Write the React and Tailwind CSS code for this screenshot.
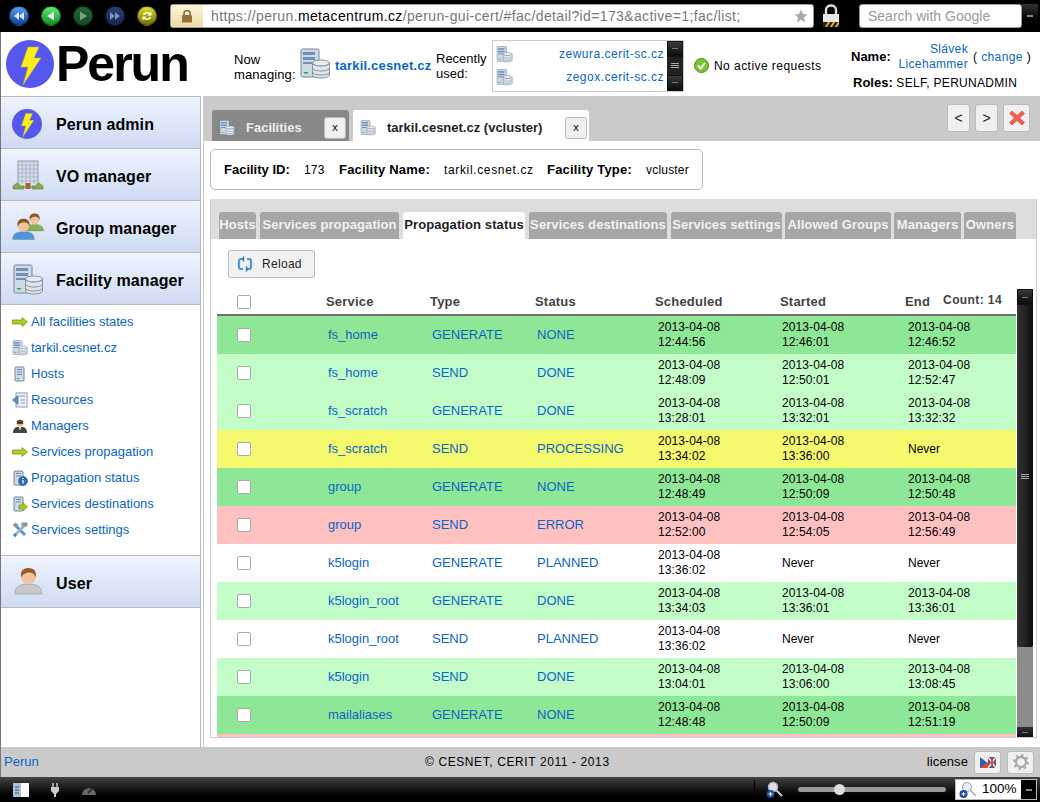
import React from "react";

const rows = [
  ["fs_home", "GENERATE", "NONE", "12:44:56", "12:46:01", "12:46:52", "bg-[#8ee796]"],
  ["fs_home", "SEND", "DONE", "12:48:09", "12:50:01", "12:52:47", "bg-[#c3fec8]"],
  ["fs_scratch", "GENERATE", "DONE", "13:28:01", "13:32:01", "13:32:32", "bg-[#c3fec8]"],
  ["fs_scratch", "SEND", "PROCESSING", "13:34:02", "13:36:00", null, "bg-[#f4f96d]"],
  ["group", "GENERATE", "NONE", "12:48:49", "12:50:09", "12:50:48", "bg-[#8ee796]"],
  ["group", "SEND", "ERROR", "12:52:00", "12:54:05", "12:56:49", "bg-[#ffc0c0]"],
  ["k5login", "GENERATE", "PLANNED", "13:36:02", null, null, "bg-white"],
  ["k5login_root", "GENERATE", "DONE", "13:34:03", "13:36:01", "13:36:01", "bg-[#c3fec8]"],
  ["k5login_root", "SEND", "PLANNED", "13:36:02", null, null, "bg-white"],
  ["k5login", "SEND", "DONE", "13:04:01", "13:06:00", "13:08:45", "bg-[#c3fec8]"],
  ["mailaliases", "GENERATE", "NONE", "12:48:48", "12:50:09", "12:51:19", "bg-[#8ee796]"],
];

const tabs = [
  ["Hosts", "w-[37px]"],
  ["Services propagation", "ml-px w-[139px]"],
  ["Propagation status", "ml-px w-[122px]"],
  ["Services destinations", "ml-px w-[138px]"],
  ["Services settings", "ml-px w-[111px]"],
  ["Allowed Groups", "w-[106px]"],
  ["Managers", "w-[67px]"],
  ["Owners", "w-[52px]"],
];

const Bolt = ({ size }) => (
  <svg width={size} height={size} viewBox="0 0 48 48">
    <circle cx="24" cy="24" r="24" fill="#5656f0" />
    <path d="M22 7 H33 L28 18 H35 L17 45 L22 27 H15 Z" fill="#f8ee1c" stroke="#c8b810" strokeWidth="0.5" />
  </svg>
);

const Server = ({ size = 16 }) => (
  <svg width={size} height={size} viewBox="0 0 32 32">
    <rect x="2" y="1" width="18" height="28" rx="1.5" fill="#cfd9e6" stroke="#74869b" />
    <rect x="4" y="4" width="12" height="3" fill="#6f93b8" />
    <rect x="4" y="9" width="12" height="3" fill="#6f93b8" />
    <rect x="4" y="14" width="12" height="2" fill="#6f93b8" />
    <rect x="5" y="24" width="4" height="1.5" fill="#3a3" />
    <ellipse cx="22" cy="15" rx="8.5" ry="3" fill="#e8edf2" stroke="#8795a3" />
    <path d="M13.5 15 V27 C13.5 31 30.5 31 30.5 27 V15 C30.5 19 13.5 19 13.5 15 Z" fill="#dfe5ea" stroke="#8795a3" />
    <path d="M13.5 20 C13.5 24 30.5 24 30.5 20 M13.5 24 C13.5 28 30.5 28 30.5 24" fill="none" stroke="#8795a3" />
  </svg>
);

const Building = () => (
  <svg width="32" height="32" viewBox="0 0 32 32">
    <rect x="6" y="1" width="20" height="26" fill="#d4dde8" stroke="#8d9aa8" />
    <path d="M10 1 V24 M14 1 V24 M18 1 V24 M22 1 V24 M6 5 H26 M6 9 H26 M6 13 H26 M6 17 H26 M6 21 H26" stroke="#9fb0c2" strokeWidth="0.8" />
    <rect x="13.5" y="23" width="5" height="6" fill="#a9662c" />
    <path d="M1 29 L1 26 L5 23 L9 26 L12 26 L12 29 Z M20 29 L20 26 L23 26 L27 23 L31 26 L31 29 Z" fill="#84ad4f" stroke="#5c7f33" strokeWidth="0.6" />
  </svg>
);

const Person = ({ x, y, s, shirt, hair }) => (
  <g transform={`translate(${x} ${y}) scale(${s})`}>
    <path d="M1 30 C1 21 7 20 12 19 L20 19 C25 20 31 21 31 30 Z" fill={shirt} stroke="#0003" />
    <circle cx="16" cy="11" r="8" fill="#eec39c" />
    <path d="M8 12 C6 3 12 1 16 1 C21 1 26 4 24 12 C23 7 20 6 16 6 C12 7 9 8 8 12 Z" fill={hair} />
  </g>
);

const Group = () => (
  <svg width="32" height="32" viewBox="0 0 32 32">
    <Person x={13} y={1} s={0.6} shirt="#8ab04f" hair="#8b5424" />
    <Person x={0} y={6} s={0.72} shirt="#4d97d8" hair="#8b5424" />
  </svg>
);

const User = () => (
  <svg width="32" height="32" viewBox="0 0 32 32">
    <Person x={2} y={0} s={0.9} shirt="#c8c8c8" hair="#9a5a26" />
  </svg>
);

const Arrow = () => (
  <svg width="16" height="16" viewBox="0 0 16 16">
    <path d="M0 6 H10 V3.5 L15.5 8 L10 12.5 V10 H0 Z" fill="#a8d028" stroke="#6c8a10" strokeWidth="0.7" />
  </svg>
);

const Hosts = () => (
  <svg width="16" height="16" viewBox="0 0 16 16">
    <rect x="3" y="1" width="9" height="14" rx="1" fill="#cfd9e6" stroke="#74869b" />
    <path d="M5 3.5 H10 M5 6 H10 M5 8.5 H10" stroke="#6f8fb0" />
    <rect x="5" y="12" width="2" height="1" fill="#3a3" />
  </svg>
);

const Resources = () => (
  <svg width="16" height="16" viewBox="0 0 16 16">
    <rect x="4" y="1" width="11" height="14" fill="#f2f5f9" stroke="#8c9aaa" />
    <path d="M7 4 H13 M9 8 H13 M9 11 H13" stroke="#7d94ad" />
    <path d="M0.5 8 L6 3.5 V12.5 Z" fill="#4d97d8" stroke="#2a6da8" strokeWidth="0.6" />
  </svg>
);

const Manager = () => (
  <svg width="16" height="16" viewBox="0 0 16 16">
    <path d="M1 15 C1 10 4 9 6 9 H10 C12 9 15 10 15 15 Z" fill="#444" />
    <path d="M7 9 H9 L8 13 Z" fill="#fff" />
    <circle cx="8" cy="5" r="3.5" fill="#e6b98e" />
    <path d="M4.5 4 C5 1 11 1 11.5 4 Z" fill="#7a4a1e" />
    <rect x="5" y="4.2" width="6" height="1.5" fill="#111" />
  </svg>
);

const PropStatus = () => (
  <svg width="16" height="16" viewBox="0 0 16 16">
    <rect x="2" y="1" width="9" height="14" rx="1" fill="#cfd9e6" stroke="#74869b" />
    <path d="M4 3.5 H9 M4 6 H9" stroke="#6f8fb0" />
    <circle cx="11" cy="11" r="4.5" fill="#2d6fb8" stroke="#1d4f8a" strokeWidth="0.6" />
    <path d="M11 10 V13.5 M11 8 V9" stroke="#fff" strokeWidth="1.3" />
  </svg>
);

const Destinations = () => (
  <svg width="16" height="16" viewBox="0 0 16 16">
    <rect x="2" y="1" width="9" height="14" rx="1" fill="#cfd9e6" stroke="#74869b" />
    <path d="M4 3.5 H9 M4 6 H9" stroke="#6f8fb0" />
    <path d="M7 9 H11 V6.5 L15.5 11 L11 15 V13 H7 Z" fill="#9ccc28" stroke="#6c8a10" strokeWidth="0.6" />
  </svg>
);

const Tools = () => (
  <svg width="16" height="16" viewBox="0 0 16 16">
    <path d="M3 3 L13 13" stroke="#4d97d8" strokeWidth="2.8" />
    <path d="M13 3 L3 13" stroke="#a6aeb6" strokeWidth="2.6" />
    <path d="M0.5 3 L3.5 0.5 L6.5 3 L3.5 5.5 Z M9.5 0.5 H15.5 V4.5 H9.5 Z" fill="#8d959d" />
    <path d="M1 13 L3 11 L5 13 L3 15.5 Z" fill="#3c82c4" />
  </svg>
);

const NavButton = ({ from, to, children }) => (
  <div className={`w-5 h-5 rounded-full bg-gradient-to-b ${from} ${to} border border-black/40 flex items-center justify-center`}>
    <svg width="14" height="14" viewBox="0 0 14 14" fill="#dfe8f0">
      {children}
    </svg>
  </div>
);

const ThumbButton = ({ children }) => (
  <div className="h-[16px] w-[16px] shrink-0 bg-gradient-to-b from-[#3a3a3a] to-[#0c0c0c] border border-[#111] flex items-center justify-center">
    {children}
  </div>
);

const SmallBtn = ({ className, children }) => (
  <div className={`bg-[#f0f0f0] border border-[#bbb] rounded-[3px] flex items-center justify-center shrink-0 ${className}`}>
    {children}
  </div>
);

const MenuItem = ({ icon, label }) => (
  <div className="h-[52px] pt-[3px] flex items-center bg-gradient-to-b from-[#eff3fd] to-[#cfdbf4] border-b border-[#bbb]">
    <div className="w-[55px] pl-[11px] flex items-center">{icon}</div>
    <span className="mt-[2px] text-[16px] font-bold text-black tracking-[0.1px]">{label}</span>
  </div>
);

const SubItem = ({ icon, label }) => (
  <div className="h-[26px] flex items-center gap-[3px] pl-[10px]">
    <span className="w-[17px] flex justify-center">{icon}</span>
    <span className="text-[13px] text-[#0a65c8]">{label}</span>
  </div>
);

const TwoLines = ({ time, never }) =>
  time ? (
    <div className="text-[12px] leading-[15px] text-black tracking-[0.1px]">
      2013-04-08
      <br />
      {time}
    </div>
  ) : (
    <div className="text-[12px] text-black">{never}</div>
  );

const Checkbox = () => (
  <div className="pl-[20px]">
    <div className="w-[14px] h-[14px] bg-white border border-[#aaa] rounded-[2px]" />
  </div>
);

const App = () => {
  return (
    <div className="w-[1040px] h-[802px] flex flex-col overflow-hidden bg-white font-['Liberation_Sans',sans-serif]">
      {/* browser toolbar */}
      <div className="h-[32px] shrink-0 bg-black flex items-center pl-[9px]">
        <div className="flex gap-[12px]">
          <NavButton from="from-[#5c9cf0]" to="to-[#0c3f9a]"><path d="M7 3 L2 7 L7 11 Z M12 3 L7 7 L12 11 Z" /></NavButton>
          <NavButton from="from-[#5cf06c]" to="to-[#0c8a24]"><path d="M10 2.5 L3 7 L10 11.5 Z" /></NavButton>
          <NavButton from="from-[#1e6a34]" to="to-[#144a24]"><path d="M4 2.5 L11 7 L4 11.5 Z" fill="#7f9f88" /></NavButton>
          <NavButton from="from-[#24407a]" to="to-[#152750]"><path d="M2 3 L7 7 L2 11 Z M7 3 L12 7 L7 11 Z" fill="#8090b0" /></NavButton>
          <NavButton from="from-[#e6e020]" to="to-[#6e6a08]"><path d="M3 6 C3 3 8 2 10 4 L11.5 2.5 V6.5 H7.5 L9 5 C7.5 4 5 4.5 4.5 6 Z M11 8 C11 11 6 12 4 10 L2.5 11.5 V7.5 H6.5 L5 9 C6.5 10 9 9.5 9.5 8 Z" fill="#fff" /></NavButton>
        </div>
        <div className="ml-[13px] w-[644px] h-[24px] rounded-[3px] bg-white flex items-center overflow-hidden border border-[#999]">
          <div className="w-[32px] h-full bg-gradient-to-b from-[#fdf5d8] to-[#ecdca6] flex items-center justify-center shrink-0">
            <svg width="12" height="14" viewBox="0 0 12 14">
              <path d="M3 6 V4 C3 1 9 1 9 4 V6" fill="none" stroke="#8a6a30" strokeWidth="1.6" />
              <rect x="1" y="6" width="10" height="7.5" rx="1" fill="#94703a" />
            </svg>
          </div>
          <div className="pl-[8px] flex-1 text-[14px] text-[#777] tracking-[0.37px] whitespace-nowrap">
            https://perun.<span className="text-black">metacentrum.cz</span>/perun-gui-cert/#fac/detail?id=173&active=1;fac/list;
          </div>
          <svg width="14" height="14" viewBox="0 0 14 14" className="mr-[5px]">
            <path d="M7 0.5 L9 5 L13.5 5.4 L10 8.5 L11 13.5 L7 10.8 L3 13.5 L4 8.5 L0.5 5.4 L5 5 Z" fill="#aaa" />
          </svg>
        </div>
        <svg width="20" height="26" viewBox="0 0 20 26" className="ml-[7px]">
          <path d="M5 12 V7 C5 1 15 1 15 7 V12" fill="none" stroke="#ddd" strokeWidth="2.4" />
          <rect x="2" y="11" width="16" height="10" fill="#e8e8e8" />
          <rect x="2" y="19" width="16" height="5" fill="#222" />
          <path d="M4 24 L7 19 H9 L6 24 Z M9 24 L12 19 H14 L11 24 Z M14 24 L17 19 H18 V21 L16 24 Z" fill="#e8c020" />
        </svg>
        <div className="ml-[18px] w-[163px] h-[24px] bg-white rounded-[3px] border border-[#999] flex items-center pl-[8px] text-[14px] text-[#999] whitespace-nowrap">
          Search with Google
        </div>
        <div className="w-[16px] h-[24px] bg-gradient-to-b from-[#333] to-black flex items-center justify-center">
          <div className="w-[6px] h-[2px] bg-[#888]" />
        </div>
      </div>

      <div className="flex-1 flex flex-col border-l border-[#777] min-h-0">
        {/* app header */}
        <div className="h-[64px] shrink-0 flex items-center bg-white">
          <div className="ml-[5px]"><Bolt size={48} /></div>
          <div className="ml-[2px] text-[50px] font-bold leading-none text-black tracking-[-2px] w-[178px]">Perun</div>
          <div className="text-[13px] leading-[15px] text-black mt-[5px] tracking-[0.1px] w-[65px]">
            Now
            <br />
            managing:
          </div>
          <Server size={32} />
          <div className="ml-[4px] mt-[3px] text-[13px] font-bold text-[#0a65c8] tracking-[0.2px] w-[62px] whitespace-nowrap">tarkil.cesnet.cz</div>
          <div className="ml-[39px] mt-[4px] text-[13px] leading-[15px] text-black w-[56px]">
            Recently
            <br />
            used:
          </div>
          <div className="w-[192px] h-[52px] mt-[3px] border border-[#ccc] flex overflow-hidden">
            <div className="flex-1 pl-[3px] pr-[3px] pt-[2px] overflow-hidden">
              {["zewura.cerit-sc.cz", "zegox.cerit-sc.cz", ""].map((name, i) => (
                <div key={i} className="h-[23px] flex items-center justify-between">
                  <Server size={17} />
                  <span className="text-[12px] text-[#0a65c8] tracking-[0.5px]">{name}</span>
                </div>
              ))}
            </div>
            <div className="w-[16px] flex flex-col bg-[#111]">
              <ThumbButton><div className="w-[6px] h-[1px] bg-[#777]" /></ThumbButton>
              <div className="flex-1 flex flex-col items-center justify-center gap-px bg-[#222]">
                <div className="w-[8px] h-px bg-[#aaa]" />
                <div className="w-[8px] h-px bg-[#aaa]" />
                <div className="w-[8px] h-px bg-[#aaa]" />
              </div>
              <ThumbButton><div className="w-[6px] h-[1px] bg-[#777]" /></ThumbButton>
            </div>
          </div>
          <svg width="15" height="15" viewBox="0 0 15 15" className="ml-[10px] mt-[3px]">
            <circle cx="7.5" cy="7.5" r="7" fill="#7cc430" stroke="#4f8a18" />
            <path d="M4 7.5 L6.6 10.5 L11 5" fill="none" stroke="#fff" strokeWidth="2" />
          </svg>
          <div className="ml-[5px] mt-[3px] w-[137px] text-[12px] text-black tracking-[0.45px] whitespace-nowrap">No active requests</div>
          <div className="text-[13px] text-black whitespace-nowrap mt-[6px]">
            <div className="flex items-center">
              <span className="font-bold w-[46px]">Name:</span>
              <span className="w-[71px] text-right leading-[15px] text-[#0a65c8] text-[12px] tracking-[0.35px]">
                Slávek
                <br />
                Licehammer
              </span>
              <span className="ml-[5px] text-[12px] tracking-[0.4px]">( <span className="text-[#0a65c8]">change</span> )</span>
            </div>
            <div className="mt-px pl-[2px] text-[12px] tracking-[0.3px]">
              <span className="font-bold text-[13px] tracking-normal">Roles:</span> SELF, PERUNADMIN
            </div>
          </div>
        </div>

        <div className="flex-1 flex min-h-0">
          {/* left menu */}
          <div className="w-[202px] shrink-0 flex">
            <div className="w-[200px] border-r border-t border-[#bbb]">
              <MenuItem icon={<Bolt size={30} />} label="Perun admin" />
              <MenuItem icon={<Building />} label="VO manager" />
              <MenuItem icon={<Group />} label="Group manager" />
              <MenuItem icon={<Server size={32} />} label="Facility manager" />
              <div className="h-[251px] pt-[4px] border-b border-[#bbb]">
                <SubItem icon={<Arrow />} label="All facilities states" />
                <SubItem icon={<Server size={16} />} label="tarkil.cesnet.cz" />
                <SubItem icon={<Hosts />} label="Hosts" />
                <SubItem icon={<Resources />} label="Resources" />
                <SubItem icon={<Manager />} label="Managers" />
                <SubItem icon={<Arrow />} label="Services propagation" />
                <SubItem icon={<PropStatus />} label="Propagation status" />
                <SubItem icon={<Destinations />} label="Services destinations" />
                <SubItem icon={<Tools />} label="Services settings" />
              </div>
              <MenuItem icon={<User />} label="User" />
            </div>
          </div>

          {/* main panel */}
          <div className="flex-1 min-w-0 border-l border-[#ccc] flex flex-col bg-white">
            <div className="h-[45px] shrink-0 bg-[#cacaca] flex items-end pl-[8px] pr-[10px]">
              <div className="w-[137px] h-[31px] bg-[#888] rounded-t-[3px] flex items-center pl-[7px] pt-[4px]">
                <Server size={16} />
                <span className="ml-[11px] text-[13px] font-bold text-[#eee] w-[62px]">Facilities</span>
                <SmallBtn className="ml-[16px] w-[22px] h-[22px] text-[11px] text-black">x</SmallBtn>
              </div>
              <div className="ml-[4px] w-[236px] h-[31px] bg-white rounded-t-[3px] flex items-center pl-[7px] pt-[4px]">
                <Server size={16} />
                <span className="ml-[11px] text-[13px] font-bold text-[#222] w-[176px] whitespace-nowrap">tarkil.cesnet.cz (vcluster)</span>
                <SmallBtn className="ml-[2px] w-[22px] h-[22px] text-[11px] text-black">x</SmallBtn>
              </div>
              <div className="ml-auto self-start mt-[8px] flex gap-[5px]">
                <SmallBtn className="w-[23px] h-[28px] text-[14px] text-[#222]">&lt;</SmallBtn>
                <SmallBtn className="w-[23px] h-[28px] text-[14px] text-[#222]">&gt;</SmallBtn>
                <SmallBtn className="w-[27px] h-[28px]">
                  <svg width="16" height="16" viewBox="0 0 16 16">
                    <path d="M3 1 L8 5.5 L13 1 L15.5 3.5 L10.5 8 L15.5 12.5 L13 15 L8 10.5 L3 15 L0.5 12.5 L5.5 8 L0.5 3.5 Z" fill="#f0604c" stroke="#c84030" strokeWidth="0.6" />
                  </svg>
                </SmallBtn>
              </div>
            </div>

            <div className="flex-1 min-h-0 pl-[6px] pt-[8px] pr-[3px] flex flex-col">
              {/* facility info */}
              <div className="w-[493px] h-[41px] shrink-0 border border-[#bbb] rounded-[5px] flex items-center text-[12px] text-black">
                <span className="ml-[13px] w-[80px] font-bold text-[13px]">Facility ID:</span>
                <span className="w-[35px] tracking-[0.2px]">173</span>
                <span className="w-[105px] font-bold text-[13px] tracking-[0.2px]">Facility Name:</span>
                <span className="w-[103px] tracking-[0.65px]">tarkil.cesnet.cz</span>
                <span className="w-[99px] font-bold text-[13px] tracking-[0.2px]">Facility Type:</span>
                <span className="tracking-[0.2px]">vcluster</span>
              </div>

              {/* tab panel */}
              <div className="mt-[9px] flex-1 min-h-0 border-r border-b border-l border-[#ccc] flex flex-col mb-[9px] w-[827px]">
                <div className="h-[40px] shrink-0 bg-[#ddd] flex items-end gap-[3px] pl-[8px]">
                  {tabs.map(([label, width], i) => (
                    <div
                      key={label}
                      className={`${width} h-[27px] pb-[2px] rounded-t-[3px] flex items-center justify-center text-[13px] font-bold tracking-[0.1px] whitespace-nowrap ${i === 2 ? "bg-white text-[#222]" : "bg-[#a6a6a6] text-[#f2f2f2]"}`}
                    >
                      {label}
                    </div>
                  ))}
                </div>
                <div className="pl-[17px] pt-[11px] shrink-0">
                  <div className="w-[87px] h-[28px] bg-[#f2f2f2] border border-[#bbb] rounded-[3px] flex items-center pl-[8px]">
                    <svg width="16" height="16" viewBox="0 0 16 16" fill="none" stroke="#4a9bd8" strokeWidth="2.2">
                      <path d="M7 3 H4 C3 3 2 4 2 5 V11 C2 12 3 13 4 13 H6 M9 13 H12 C13 13 14 12 14 11 V5 C14 4 13 3 12 3 H10" />
                      <path d="M7 0 L4.5 3 L7 6 Z M9 10 L11.5 13 L9 16 Z" fill="#2f78b8" strokeWidth="0.4" />
                    </svg>
                    <span className="ml-[9px] text-[12px] text-[#222] tracking-[0.3px]">Reload</span>
                  </div>
                </div>

                <div className="mt-[12px] flex-1 min-h-0 flex relative pl-[6px]">
                  <div className="w-[799px] flex flex-col min-h-0">
                    <div className="h-[26px] shrink-0 border-b-2 border-[#707070] grid grid-cols-[109px_104px_105px_120px_125px_125px_111px] items-center text-[13px] font-bold text-[#444] tracking-[0.2px]">
                      <Checkbox />
                      <div>Service</div>
                      <div>Type</div>
                      <div>Status</div>
                      <div>Scheduled</div>
                      <div>Started</div>
                      <div>End</div>
                    </div>
                    <div className="flex-1 min-h-0 overflow-hidden">
                      {rows.map(([service, type, status, sched, start, end, bg], i) => (
                        <div
                          key={i}
                          className={`h-[38px] grid grid-cols-[109px_104px_105px_120px_125px_125px_111px] items-center ${bg}`}
                        >
                          <Checkbox />
                          <div className="pl-[2px] text-[13px] text-[#0a65c8]">{service}</div>
                          <div className="pl-[2px] text-[13px] text-[#0a65c8]">{type}</div>
                          <div className="pl-[2px] text-[13px] text-[#0a65c8]">{status}</div>
                          <div className="pl-[3px]"><TwoLines time={sched} never="Never" /></div>
                          <div className="pl-[2px]"><TwoLines time={start} never="Never" /></div>
                          <div className="pl-[3px]"><TwoLines time={end} never="Never" /></div>
                        </div>
                      ))}
                      {/* next row only shows as a sliver of pink */}
                      <div className="h-[38px] bg-[#ffc0c0]" />
                    </div>
                  </div>
                  <div className="absolute right-[34px] top-px text-[12px] font-bold text-[#444] tracking-[0.4px]">Count: 14</div>
                  {/* table scrollbar */}
                  <div className="ml-px mt-[-1px] w-[16px] flex flex-col bg-[#8c8c8c]">
                    <ThumbButton><div className="w-[6px] h-px bg-[#777]" /></ThumbButton>
                    <div className="h-[342px] shrink-0 bg-gradient-to-r from-[#333] via-[#222] to-[#0c0c0c] rounded-b-[2px] flex flex-col items-center justify-center gap-px">
                      <div className="w-[8px] h-px bg-[#aaa]" />
                      <div className="w-[8px] h-px bg-[#aaa]" />
                      <div className="w-[8px] h-px bg-[#aaa]" />
                    </div>
                    <div className="flex-1" />
                    <div className="h-[10px] shrink-0 bg-gradient-to-b from-[#333] to-[#111] flex justify-center pt-[5px]">
                      <div className="w-[6px] h-px bg-[#777]" />
                    </div>
                  </div>
                </div>
              </div>
            </div>
          </div>
        </div>

        {/* footer */}
        <div className="h-[30px] shrink-0 bg-[#cacaca] flex items-center pl-[3px] pr-[6px] text-[13px]">
          <span className="text-[#0a65c8] w-[421px]">Perun</span>
          <span className="text-[12px] text-black tracking-[0.6px] whitespace-nowrap">© CESNET, CERIT 2011 - 2013</span>
          <span className="ml-auto text-black tracking-[0.1px]">license</span>
          <SmallBtn className="ml-[6px] w-[27px] h-[23px]">
            <svg width="16" height="11" viewBox="0 0 16 11">
              <rect width="16" height="11" fill="#e8472c" />
              <rect width="8" height="5.5" fill="#eee" />
              <path d="M0 0 L7 5.5 L0 11 Z" fill="#2f5fb0" />
              <rect x="8" width="8" height="11" fill="#3458a8" />
              <path d="M8 0 L16 11 M16 0 L8 11" stroke="#eee" strokeWidth="1.6" />
              <path d="M12 0 V11 M8 5.5 H16" stroke="#e0402c" strokeWidth="1.6" />
            </svg>
          </SmallBtn>
          <SmallBtn className="ml-[6px] w-[27px] h-[23px]">
            <svg width="16" height="16" viewBox="0 0 16 16">
              <circle cx="8" cy="8" r="5" fill="none" stroke="#aaa" strokeWidth="2.4" />
              <circle cx="8" cy="8" r="7" fill="none" stroke="#aaa" strokeWidth="2" strokeDasharray="2.4 3.1" />
            </svg>
          </SmallBtn>
        </div>
      </div>

      {/* browser status bar */}
      <div className="h-[25px] shrink-0 bg-gradient-to-b from-[#444] to-black flex items-center pl-[12px] pr-[3px]">
        <svg width="18" height="16" viewBox="0 0 18 16">
          <rect x="1" y="1" width="16" height="14" fill="#fff" />
          <rect x="1" y="1" width="8" height="14" fill="#a8c0dc" />
          <path d="M3 5 H7 M3 8 H7 M3 11 H7" stroke="#556" />
        </svg>
        <svg width="10" height="16" viewBox="0 0 10 16" className="ml-[20px]">
          <path d="M3 1 V5 M7 1 V5" stroke="#ccc" strokeWidth="1.4" />
          <path d="M1 5 H9 V9 L6 12 V15 H4 V12 L1 9 Z" fill="#ccc" />
        </svg>
        <svg width="14" height="10" viewBox="0 0 14 10" className="ml-[22px]">
          <path d="M0 10 C0 1 14 1 14 10 Z" fill="#666" />
          <path d="M6 8 L10 4" stroke="#222" strokeWidth="1.4" />
        </svg>
        <div className="ml-[658px] w-px h-[19px] bg-black" />
        <svg width="18" height="18" viewBox="0 0 18 18" className="ml-[11px]">
          <circle cx="7" cy="6" r="4.5" fill="#dde" stroke="#bbb" strokeWidth="1.4" />
          <path d="M10 9 L16 15" stroke="#ccc" strokeWidth="2" />
          <circle cx="4.5" cy="13" r="4" fill="#1a4fa0" />
          <path d="M2.5 13 H6.5 M4.5 11 V15" stroke="#fff" />
        </svg>
        <div className="ml-[14px] w-[148px] h-[5px] rounded-full bg-[#999] relative">
          <div className="absolute left-[36px] top-[-3px] w-[11px] h-[11px] rounded-full bg-[#ddd]" />
        </div>
        <div className="ml-[9px] w-[82px] h-[21px] bg-white flex items-center pl-[3px] border border-[#bbb]">
          <svg width="18" height="18" viewBox="0 0 18 18">
            <circle cx="8" cy="6" r="4.5" fill="#eef" stroke="#aaa" strokeWidth="1.2" />
            <path d="M11 9 L17 15" stroke="#aaa" strokeWidth="1.6" />
            <circle cx="4.5" cy="13" r="4" fill="#1a4fa0" />
            <path d="M2.5 13 H6.5 M4.5 11 V15" stroke="#fff" />
          </svg>
          <span className="ml-[5px] text-[13.5px] text-black">100%</span>
          <div className="ml-auto w-[15px] h-full bg-black flex items-center justify-center">
            <div className="w-[6px] h-[2px] bg-[#888]" />
          </div>
        </div>
      </div>
    </div>
  );
};

export default App;
